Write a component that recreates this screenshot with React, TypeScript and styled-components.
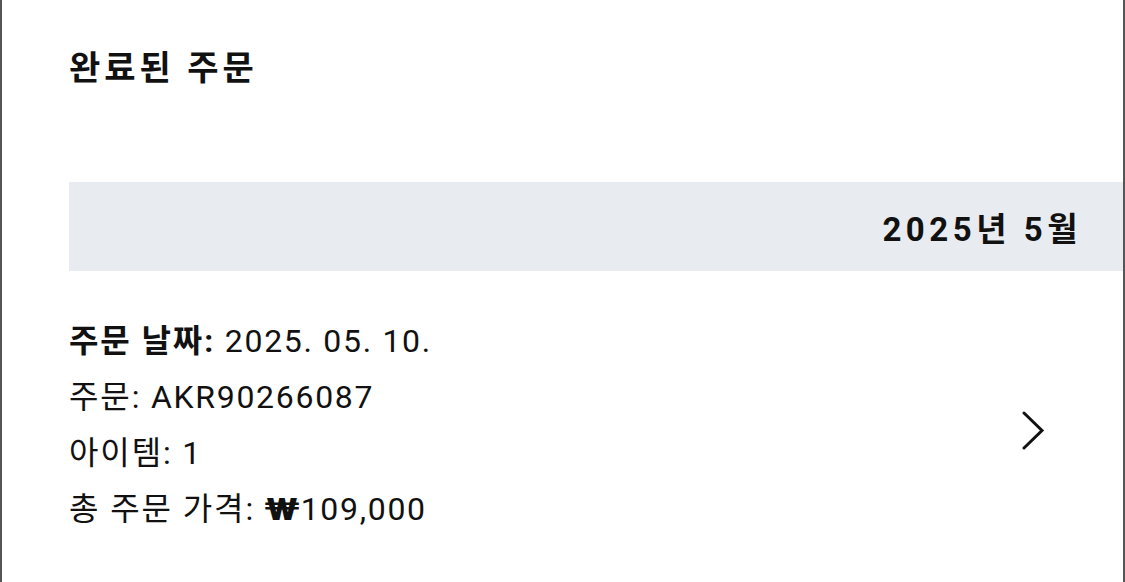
import React from 'react';
import styled, { createGlobalStyle } from 'styled-components';

const GlobalStyle = createGlobalStyle`
  html, body {
    margin: 0;
    padding: 0;
    background: #ffffff;
  }
  body {
    font-family: Roboto, "Noto Sans CJK KR", sans-serif;
    color: #111111;
  }
`;

const Frame = styled.div`
  box-sizing: border-box;
  height: 582px;
  overflow: hidden;
  border-left: 2px solid #555555;
  border-right: 2px solid #555555;
  padding-left: 67px;
`;

const Title = styled.h1`
  margin: 48px 0 0;
  height: 40px;
  line-height: 40px;
  font-size: 34px;
  font-weight: 700;
  letter-spacing: 4px;
`;

const MonthBand = styled.div`
  margin-top: 94px;
  height: 89px;
  background: #e8ebef;
  display: flex;
  align-items: center;
  justify-content: flex-end;
  padding-right: 41px;
`;

const MonthLabel = styled.span`
  font-size: 33px;
  font-weight: 700;
  letter-spacing: 4.5px;
`;

const OrderRow = styled.div`
  margin-top: 42px;
  display: flex;
  align-items: center;
  justify-content: space-between;
  padding-right: 78px;
`;

const Details = styled.div`
  display: flex;
  flex-direction: column;
`;

const Line = styled.div`
  height: 56px;
  line-height: 56px;
  font-size: 32px;
  letter-spacing: 1.7px;
  white-space: nowrap;
`;

const Label = styled.span<{ strong?: boolean }>`
  font-weight: ${(p) => (p.strong ? 700 : 400)};
  letter-spacing: 1.9px;
`;

/* the won sign in the reference is a wide, heavy glyph */
const Currency = styled.span`
  display: inline-block;
  font-weight: 700;
  letter-spacing: 0;
  transform: scaleX(1.35);
  margin: 0 6px 0 4px;
`;

const Chevron = () => (
  <svg width="24" height="39" viewBox="0 0 24 39" style={{ marginTop: 10 }}>
    <polyline
      points="3,2 21,19.5 3,37"
      fill="none"
      stroke="#111"
      strokeWidth="3"
      strokeLinecap="round"
      strokeLinejoin="miter"
    />
  </svg>
);

const order = {
  date: '2025. 05. 10.',
  id: 'AKR90266087',
  items: 1,
  total: '109,000',
};

export default function App() {
  return (
    <>
      <GlobalStyle />
      <Frame>
        <Title>완료된 주문</Title>
        <MonthBand>
          <MonthLabel>2025년 5월</MonthLabel>
        </MonthBand>
        <OrderRow>
          <Details>
            <Line>
              <Label strong>주문 날짜:</Label> {order.date}
            </Line>
            <Line>
              <Label>주문:</Label> {order.id}
            </Line>
            <Line>
              <Label>아이템:</Label> {order.items}
            </Line>
            <Line>
              <Label>총 주문 가격:</Label> <Currency>₩</Currency>
              {order.total}
            </Line>
          </Details>
          <Chevron />
        </OrderRow>
      </Frame>
    </>
  );
}
